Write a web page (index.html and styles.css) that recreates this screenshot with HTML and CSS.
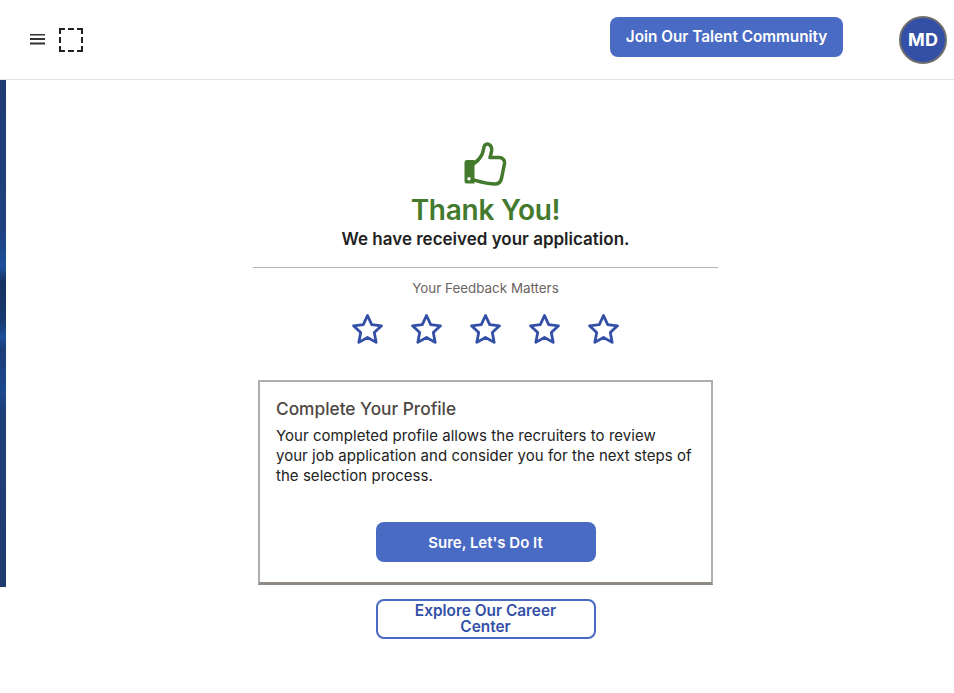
FILE: index.html
```html
<!DOCTYPE html>
<html lang="en">

<head>
    <meta charset="UTF-8">
    <title>Thank You</title>
    <link rel="stylesheet" href="styles.css">
</head>

<body>
    <header class="topbar">
        <div class="topbar_left">
            <svg class="icon_menu" width="16" height="12" viewBox="0 0 16 12">
                <path d="M0 .5h15M0 5h15M0 9.500h15" stroke="#333" stroke-width="1.800" fill="none" />
            </svg>
            <div class="logo_empty"></div>
        </div>
        <a href="#" class="btn btn_join">Join Our Talent Community</a>
        <div class="avatar">MD</div>
    </header>

    <div class="page">
        <div class="strip"></div>
        <main class="main">
            <svg class="icon_thumb" width="44" height="46" viewBox="0 0 44 46">
                <path d="M3 18h7.500v23.500H3a2.500 2.500 0 0 1-2.500-2.500V20.500A2.500 2.500 0 0 1 3 18z" fill="#437a2d" />
                <path d="M10 21.500c3-2 6-5 8-9c1-2.500 1.500-5 2-7.500c.5-2.500 3-3.500 5-2.500c2.500 1.200 3 4 2.500 7c-.3 2-1 4-1.500 6h9c3.500 0 6 2.500 5.500 6l-3 15c-.8 3.500-3 5.500-6.500 5.500c-7.500 0-14-2-21-4" fill="none" stroke="#437a2d" stroke-width="3.500" stroke-linejoin="round" stroke-linecap="round" />
                <circle cx="5" cy="36.700" r="1.700" fill="#fff" />
            </svg>
            <h1 class="title">Thank You!</h1>
            <p class="subtitle">We have received your application.</p>
            <div class="feedback">
                <p class="feedback_label">Your Feedback Matters</p>
                <div class="stars">
                    <svg class="star" width="33" height="33" viewBox="0 0 33 33"><path d="M16.500 2.500l4.200 9.100 9.800 1.200-7.200 6.800 1.900 9.800-8.700-4.900-8.700 4.900 1.900-9.800-7.200-6.800 9.800-1.200z" /></svg>
                    <svg class="star" width="33" height="33" viewBox="0 0 33 33"><path d="M16.500 2.500l4.200 9.100 9.800 1.200-7.200 6.800 1.900 9.800-8.700-4.900-8.700 4.900 1.900-9.800-7.200-6.800 9.800-1.200z" /></svg>
                    <svg class="star" width="33" height="33" viewBox="0 0 33 33"><path d="M16.500 2.500l4.200 9.100 9.800 1.200-7.200 6.800 1.900 9.800-8.700-4.900-8.700 4.900 1.900-9.800-7.200-6.800 9.800-1.200z" /></svg>
                    <svg class="star" width="33" height="33" viewBox="0 0 33 33"><path d="M16.500 2.500l4.200 9.100 9.800 1.200-7.200 6.800 1.900 9.800-8.700-4.900-8.700 4.900 1.900-9.800-7.200-6.800 9.800-1.200z" /></svg>
                    <svg class="star" width="33" height="33" viewBox="0 0 33 33"><path d="M16.500 2.500l4.200 9.100 9.800 1.200-7.200 6.800 1.900 9.800-8.700-4.900-8.700 4.900 1.900-9.800-7.200-6.800 9.800-1.200z" /></svg>
                </div>
            </div>
            <section class="card">
                <h2 class="card_title">Complete Your Profile</h2>
                <p class="card_text">Your completed profile allows the recruiters to review<br>your job application and consider you for the next steps of<br>the selection process.</p>
                <a href="#" class="btn btn_sure">Sure, Let's Do It</a>
            </section>
            <a href="#" class="btn_outline">Explore Our Career Center</a>
        </main>
    </div>
</body>

</html>
```

FILE: styles.css
```css
* {
    margin: 0;
    padding: 0;
    box-sizing: border-box;
}

body {
    font-family: "Inter", "Liberation Sans", sans-serif;
    background: #fff;
    color: #222;
}

a {
    text-decoration: none;
}

.topbar {
    height: 80px;
    display: flex;
    align-items: center;
    border-bottom: 1px solid #e2e2e2;
    padding: 0 7px 0 30px;
}

.topbar_left {
    display: flex;
    align-items: center;
    gap: 13px;
    flex: 1;
}

.icon_menu {
    display: block;
}

.logo_empty {
    width: 24px;
    height: 24px;
    border: 2px dashed #222;
}

.btn {
    display: flex;
    align-items: center;
    justify-content: center;
    background: #4a6bc3;
    color: #fff;
    font-weight: 600;
    border-radius: 8px;
}

.btn_join {
    width: 233px;
    height: 40px;
    font-size: 15.300px;
    margin-right: 56px;
    margin-top: -6px;
}

.avatar {
    width: 48px;
    height: 48px;
    border-radius: 50%;
    border: 2px solid #6e6e6e;
    background: #3350a6;
    color: #fff;
    font-size: 18px;
    font-weight: 700;
    display: flex;
    align-items: center;
    justify-content: center;
}

.page {
    display: flex;
    align-items: flex-start;
}

.strip {
    width: 6px;
    height: 507px;
    background: linear-gradient(180deg, #1f3c72 0, #1f4080 150px, #1c4f9a 187px, #16315e 203px, #183a70 240px, #1c4f9a 257px, #1c3c78 270px, #1d4a8e 313px, #1f3f78 330px, #1f3c70 507px);
}

.main {
    flex: 1;
    display: flex;
    flex-direction: column;
    align-items: center;
    padding: 62px 0 0 11px;
}

.icon_thumb {
    display: block;
}

.title {
    font-size: 28px;
    line-height: 36px;
    font-weight: 600;
    letter-spacing: -.25px;
    color: #437a2d;
    margin-top: 4px;
}

.subtitle {
    font-size: 17px;
    line-height: 22px;
    font-weight: 600;
    color: #222;
}

.feedback {
    width: 465px;
    margin-top: 17px;
    border-top: 1px solid #b5b5b5;
    padding-top: 12px;
    text-align: center;
}

.feedback_label {
    font-size: 13.400px;
    line-height: 17px;
    color: #6b6460;
}

.stars {
    display: flex;
    justify-content: center;
    gap: 26px;
    margin-top: 16px;
}

.star {
    display: block;
}

.star path {
    fill: none;
    stroke: #3350a6;
    stroke-width: 2.800;
    stroke-linejoin: round;
}

.card {
    width: 455px;
    height: 205px;
    margin-top: 34px;
    border: 2px solid #aeaeae;
    border-bottom: 3px solid #8f8a84;
    padding: 16px 16px 0;
}

.card_title {
    font-size: 17.300px;
    line-height: 22px;
    font-weight: 500;
    color: #4d4844;
}

.card_text {
    font-size: 15px;
    letter-spacing: .04px;
    line-height: 20px;
    margin-top: 6px;
    color: #222;
}

.btn_sure {
    width: 220px;
    height: 40px;
    font-size: 15px;
    margin: 36px auto 0;
}

.btn_outline {
    display: flex;
    align-items: center;
    justify-content: center;
    text-align: center;
    width: 220px;
    height: 40px;
    margin-top: 14px;
    padding: 0 30px;
    border: 2px solid #4a6bc3;
    border-radius: 8px;
    background: #fff;
    color: #3350a6;
    font-size: 15.400px;
    line-height: 16px;
    font-weight: 600;
}
```
